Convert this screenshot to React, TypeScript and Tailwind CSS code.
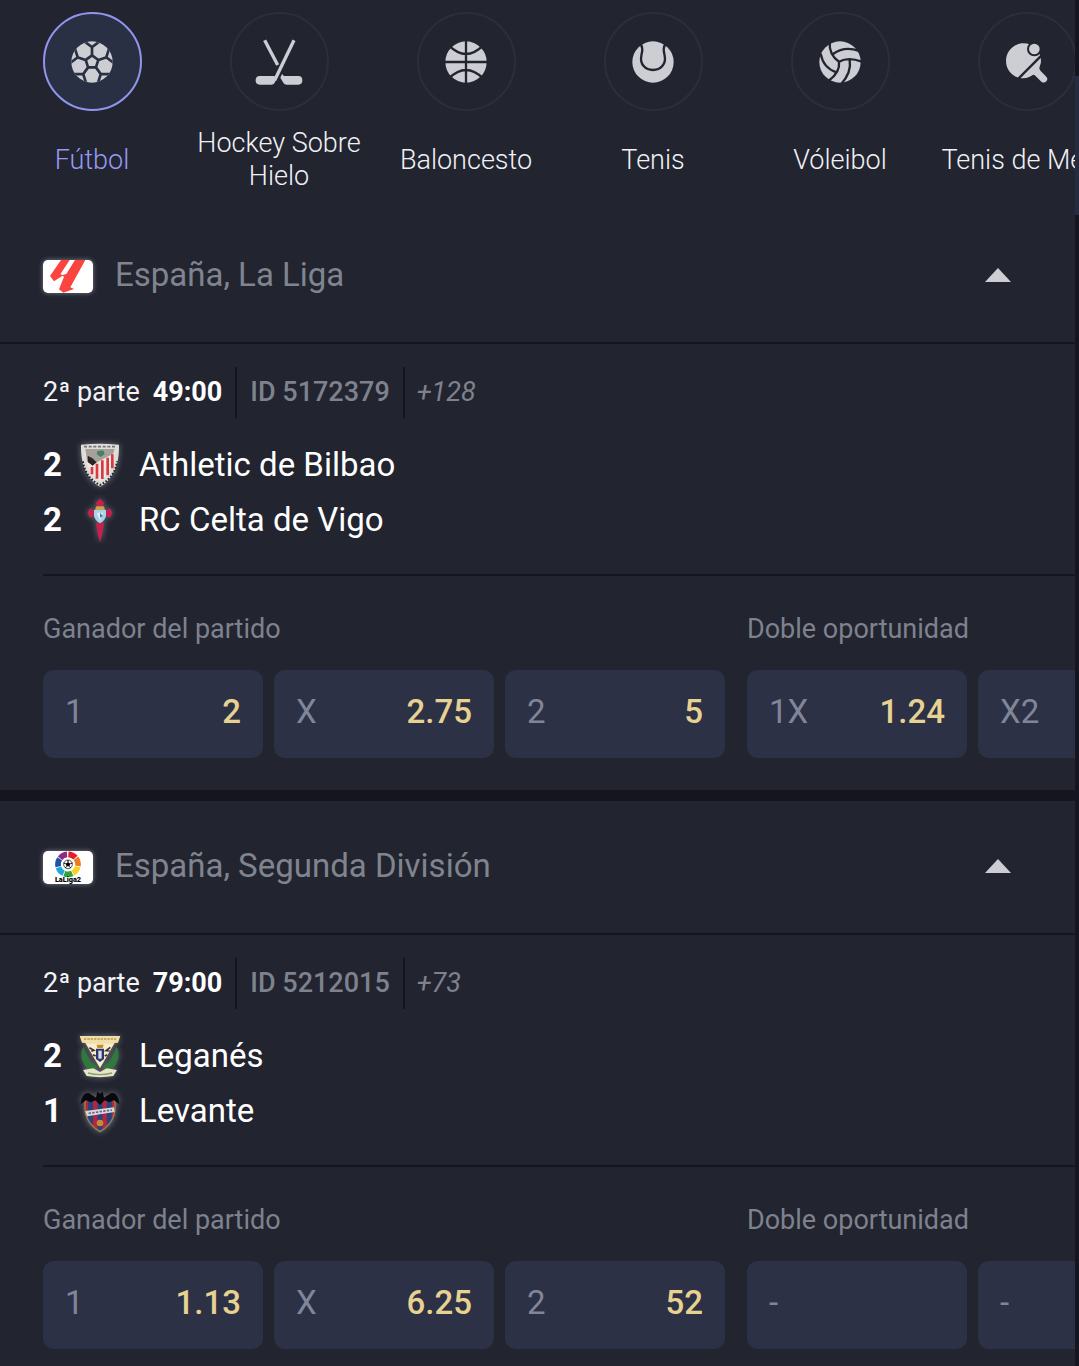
import { useState, type ReactNode } from 'react';
import clsx from 'clsx';

interface Outcome {
  label: string;
  odd?: string;
}

interface Market {
  name: string;
  outcomes: Outcome[];
}

interface Team {
  name: string;
  score: number;
  crest: ReactNode;
}

interface League {
  name: string;
  logo: ReactNode;
  period: string;
  time: string;
  eventId: string;
  more: string;
  teams: Team[];
  markets: Market[];
}

const SPOKES = [0, 72, 144, 216, 288];

function FootballIcon() {
  return (
    <svg viewBox="0 0 150 150" className="size-[50px]" aria-hidden="true">
      <defs>
        <clipPath id="football-clip">
          <circle cx="75" cy="75" r="62" />
        </clipPath>
      </defs>
      <circle cx="75" cy="75" r="62" className="fill-[#cdced3]" />
      <g clipPath="url(#football-clip)" className="fill-none stroke-[#293044]" strokeWidth="8">
        {SPOKES.map((deg) => (
          <path key={deg} d="M94 69L75 55V31M50 12L75 30L100 12" transform={`rotate(${deg} 75 75)`} />
        ))}
      </g>
    </svg>
  );
}

function HockeyIcon() {
  return (
    <svg viewBox="0 0 150 150" className="size-[50px]" aria-hidden="true">
      <g className="fill-none stroke-[#cdced3]" strokeWidth="10">
        <path d="M32 10L71 84" />
        <path d="M120 10L62 130" />
      </g>
      <g className="fill-[#cdced3]">
        <path d="M17 117H60L69 123L62 137Q59 143 52 143H17Q5 143 5 130T17 117Z" />
        <path d="M84 111L90 117H133Q145 117 145 130T133 143H98Q91 143 88 137L79 122Z" />
      </g>
    </svg>
  );
}

function BasketballIcon() {
  return (
    <svg viewBox="0 0 150 150" className="size-[50px]" aria-hidden="true">
      <circle cx="75" cy="75" r="62" className="fill-[#cdced3]" />
      <path
        d="M75 10V140M10 75H140M24 26Q75 76 126 26M24 124Q75 74 126 124"
        className="fill-none stroke-[#222430]"
        strokeWidth="7"
      />
    </svg>
  );
}

function TennisIcon() {
  return (
    <svg viewBox="0 0 150 150" className="size-[50px]" aria-hidden="true">
      <circle cx="75" cy="75" r="62" className="fill-[#cdced3]" />
      <path
        d="M36 18C46 32 43 42 40 56C35 82 52 99 75 99S115 82 110 56C107 42 104 32 114 18"
        className="fill-none stroke-[#222430]"
        strokeWidth="7"
      />
    </svg>
  );
}

function VolleyballIcon() {
  return (
    <svg viewBox="0 0 150 150" className="size-[50px]" aria-hidden="true">
      <circle cx="75" cy="75" r="62" className="fill-[#cdced3]" />
      <path
        d="M44 14C42 44 54 62 72 74C95 62 116 65 140 74M72 74C75 98 63 116 40 132M17 50C22 78 40 98 64 106M54 51C76 35 104 31 132 42M104 68C109 98 98 120 78 142"
        className="fill-none stroke-[#222430]"
        strokeWidth="7"
      />
    </svg>
  );
}

function TableTennisIcon() {
  return (
    <svg viewBox="0 0 150 150" className="size-[50px]" aria-hidden="true">
      <path
        d="M64 19C96 19 117 43 117 72C117 80 113 87 112 94Q112 98 116 102L133 119Q139 126 133 133T118 134L100 116Q96 112 92 114C84 119 76 124 64 124C34 124 12 100 12 71S35 19 64 19Z"
        className="fill-[#cdced3]"
      />
      <path d="M50 124L118 56" className="stroke-[#222430]" strokeWidth="7" />
      <circle cx="97" cy="36" r="19" className="fill-[#cdced3] stroke-[#222430]" strokeWidth="6" />
    </svg>
  );
}

function LaLigaLogo() {
  return (
    <svg viewBox="0 0 150 99" className="size-full" aria-hidden="true">
      <g className="fill-[#fb4440]">
        <path d="M54 0H80L52 43L61 46L33 64L21 48Z" />
        <path d="M96 0H127L82 82L93 87L61 98L48 88L63 50L56 46L70 42Z" />
      </g>
    </svg>
  );
}

const RING = ['#e2202c', '#f07a22', '#f8d21c', '#2fa43c', '#22a7e0', '#2052a8', '#8a2b86'];

function LaLiga2Logo() {
  return (
    <svg viewBox="0 0 150 99" className="size-full" aria-hidden="true">
      <g className="fill-none" strokeWidth="17">
        {RING.map((color, i) => (
          <circle
            key={color}
            cx="75"
            cy="40"
            r="30"
            pathLength="70"
            strokeDasharray="9 61"
            stroke={color}
            transform={`rotate(${i * 51 - 88} 75 40)`}
          />
        ))}
      </g>
      <circle cx="75" cy="40" r="13" className="fill-white stroke-black" strokeWidth="2" />
      <path d="M75 33L82 38L79 46H71L68 38Z" />
      <path d="M75 33V27M82 38L88 36M79 46L83 51M71 46L67 51M68 38L62 36" className="stroke-black" strokeWidth="3" />
      <text x="75" y="94" textAnchor="middle" className="fill-black font-[Roboto,sans-serif] text-[22px] font-black">
        LaLiga2
      </text>
    </svg>
  );
}

function AthleticCrest() {
  return (
    <svg viewBox="0 0 132 132" className="size-full" aria-hidden="true">
      <path d="M9 5Q66 -1 123 5C124 58 110 106 66 131C22 106 8 58 9 5Z" className="fill-[#deddd9]" />
      <path d="M15 55C19 85 34 110 66 126C98 110 113 85 117 55" className="fill-none stroke-[#26262a]" strokeWidth="6" strokeDasharray="5 5" />
      <path d="M18 11H114" className="stroke-[#77777a]" strokeWidth="5" strokeDasharray="9 5" />
      <path d="M22 18H110C111 58 98 95 66 115C34 95 21 58 22 18Z" className="fill-[#f3e8e3]" />
      <path d="M22 18H110L106 32L46 64L27 56Z" className="fill-[#a7a19c]" />
      <path d="M58 24L76 22L80 34L68 42L56 34Z" className="fill-[#4b8064]" />
      <path d="M29 38L43 46L56 58L44 68L30 58Z" className="fill-[#2b2527]" />
      <path d="M42 72V94M57 62V107M73 52V108M89 44V97M103 34V76" className="stroke-[#d53c42]" strokeWidth="8" />
    </svg>
  );
}

function CeltaCrest() {
  return (
    <svg viewBox="0 0 132 132" className="size-full" aria-hidden="true">
      <g className="fill-[#c91f4d]">
        <path d="M66 2L79 15L71 29H61L53 15Z" />
        <path d="M29 45L36 31L53 42V49L36 59Z" />
        <path d="M103 45L96 31L79 42V49L96 59Z" />
        <path d="M54 75H78L72 112L66 134L60 112Z" />
      </g>
      <path d="M48 36H84V54Q80 70 66 76Q52 70 48 54Z" className="fill-[#a9d2ec]" />
      <path d="M55 25H77L81 36H51Z" className="fill-[#c9a64b]" />
      <path d="M56 44H76L66 67Z" className="fill-[#e3f0f8]" />
      <path d="M66 44L75 54L66 59Z" className="fill-[#4d7fa8]" />
    </svg>
  );
}

function LeganesCrest() {
  return (
    <svg viewBox="0 0 132 132" className="size-full" aria-hidden="true">
      <path d="M5 6H127L120 26L110 27L66 103L22 27L12 26Z" className="fill-[#f0dfa6]" />
      <path d="M18 15H114" className="stroke-[#b99c55]" strokeWidth="5" strokeDasharray="7 3" />
      <path d="M16 38C2 62 14 106 50 112L58 97C40 92 30 72 16 38Z" className="fill-[#2e7a3d]" />
      <path d="M116 38C130 62 118 106 82 112L74 97C92 92 102 72 116 38Z" className="fill-[#2e7a3d]" />
      <path d="M26 29H106L66 99Z" className="fill-[#f7edcf]" />
      <path d="M54 44H78V75L66 84L54 75Z" className="fill-[#27366e]" />
      <path d="M61 50H71V74H61Z" className="fill-[#dadbe2]" />
      <path d="M56 32H77L74 42H58Z" className="fill-[#c78a31]" />
      <path d="M34 41L48 49L40 52M97 40L84 50L95 51M45 62L53 66M88 62L80 66" className="fill-none stroke-[#39352f]" strokeWidth="5" />
      <path d="M15 108L46 103L66 114L86 103L117 108L106 126Q66 133 26 126Z" className="fill-[#e9e3c7]" />
      <path d="M30 117Q66 127 102 117" className="fill-none stroke-[#80a36f]" strokeWidth="4" />
    </svg>
  );
}

function LevanteCrest() {
  return (
    <svg viewBox="0 0 132 132" className="size-full" aria-hidden="true">
      <path d="M22 34Q66 24 110 34C117 78 100 108 66 128C32 108 15 78 22 34Z" className="fill-[#b5263a]" />
      <path d="M38 36V106M66 34V125M94 36V106" className="stroke-[#26437f]" strokeWidth="15" />
      <path d="M22 34Q66 24 110 34C117 78 100 108 66 128C32 108 15 78 22 34Z" className="fill-none stroke-[#958347]" strokeWidth="4" />
      <path d="M8 46C10 22 20 10 32 12L54 26L58 8L66 14L74 8L78 26L100 12C114 10 122 22 124 46L108 34L94 40L80 34L66 48L52 34L38 40L24 34Z" className="fill-[#08090d]" />
      <path d="M22 66L108 55L110 69L27 82Z" className="fill-[#d5d7df]" />
      <path d="M32 73L102 63" className="stroke-[#5a6382]" strokeWidth="5" strokeDasharray="7 4" />
      <circle cx="66" cy="102" r="10" className="fill-[#c58a3c]" />
    </svg>
  );
}

const SPORTS = [
  { name: 'Fútbol', icon: <FootballIcon /> },
  { name: 'Hockey Sobre Hielo', icon: <HockeyIcon /> },
  { name: 'Baloncesto', icon: <BasketballIcon /> },
  { name: 'Tenis', icon: <TennisIcon /> },
  { name: 'Vóleibol', icon: <VolleyballIcon /> },
  { name: 'Tenis de Mesa', icon: <TableTennisIcon /> },
];

const LEAGUES: League[] = [
  {
    name: 'España, La Liga',
    logo: <LaLigaLogo />,
    period: '2ª parte',
    time: '49:00',
    eventId: '5172379',
    more: '+128',
    teams: [
      { name: 'Athletic de Bilbao', score: 2, crest: <AthleticCrest /> },
      { name: 'RC Celta de Vigo', score: 2, crest: <CeltaCrest /> },
    ],
    markets: [
      {
        name: 'Ganador del partido',
        outcomes: [
          { label: '1', odd: '2' },
          { label: 'X', odd: '2.75' },
          { label: '2', odd: '5' },
        ],
      },
      { name: 'Doble oportunidad', outcomes: [{ label: '1X', odd: '1.24' }, { label: 'X2' }] },
    ],
  },
  {
    name: 'España, Segunda División',
    logo: <LaLiga2Logo />,
    period: '2ª parte',
    time: '79:00',
    eventId: '5212015',
    more: '+73',
    teams: [
      { name: 'Leganés', score: 2, crest: <LeganesCrest /> },
      { name: 'Levante', score: 1, crest: <LevanteCrest /> },
    ],
    markets: [
      {
        name: 'Ganador del partido',
        outcomes: [
          { label: '1', odd: '1.13' },
          { label: 'X', odd: '6.25' },
          { label: '2', odd: '52' },
        ],
      },
      { name: 'Doble oportunidad', outcomes: [{ label: '-' }, { label: '-' }] },
    ],
  },
];

function SportsNav() {
  const [active, setActive] = useState('Fútbol');

  return (
    <nav className="flex gap-[11px] pt-3 pb-[17px] pl-1">
      {SPORTS.map((sport) => (
        <button
          key={sport.name}
          type="button"
          onClick={() => setActive(sport.name)}
          className="flex w-44 shrink-0 flex-col items-center gap-4"
        >
          <span
            className={clsx(
              'flex size-[99px] items-center justify-center rounded-full border-2',
              active === sport.name ? 'border-[#9195ec] bg-[#293044]' : 'border-[#2c2e3a]'
            )}
          >
            {sport.icon}
          </span>
          <span
            className={clsx(
              'flex h-[66px] items-center text-[27px] leading-[33px] font-light',
              active === sport.name ? 'text-[#9699f0]' : 'text-[#f0f1f4]'
            )}
          >
            {sport.name}
          </span>
        </button>
      ))}
    </nav>
  );
}

function OddButton({ label, odd }: Outcome) {
  return (
    <button
      type="button"
      className="flex h-[88px] w-[220px] shrink-0 items-center justify-between rounded-[11px] bg-[#2c3145] px-[22px] pb-1 text-[33px]"
    >
      <span className="text-[#80869a]">{label}</span>
      {odd && <span className="font-medium text-[#e7d292]">{odd}</span>}
    </button>
  );
}

function LeagueSection({ league }: { league: League }) {
  const [open, setOpen] = useState(true);

  return (
    <section className="border-b-[11px] border-[#14151f]">
      {/* Header */}
      <h2 className="border-b-2 border-[#14151f]">
        <button
          type="button"
          aria-expanded={open}
          onClick={() => setOpen(!open)}
          className="flex h-[132px] w-full items-center pr-16 pl-[43px] text-[33px] text-[#80848f]"
        >
          <span className="h-[33px] w-[50px] overflow-hidden rounded-[5px] bg-white shadow-[0_0_5px_rgba(255,255,255,0.4)]">
            {league.logo}
          </span>
          <span className="ml-[22px] pb-0.5">{league.name}</span>
          <svg
            viewBox="0 0 26 14"
            className={clsx('mb-0.5 ml-auto h-3.5 w-[26px] fill-[#cdced3]', !open && 'rotate-180')}
            aria-hidden="true"
          >
            <path d="M0 14L13 0L26 14Z" />
          </svg>
        </button>
      </h2>

      {open && (
        <div className="pt-[23px] pb-8 pl-[43px]">
          {/* Event info */}
          <div className="flex h-[51px] items-center text-[27px] text-[#7e828e]">
            <span className="text-[#f2f3f6]">{league.period}</span>
            <span className="ml-[13px] font-bold text-white">{league.time}</span>
            <span className="ml-[13px] flex h-full items-center border-x-2 border-[#14151f] px-[13px] font-medium">
              ID {league.eventId}
            </span>
            <a href="#markets" className="ml-3 italic">
              {league.more}
            </a>
          </div>

          {/* Teams */}
          <ul className="border-b-2 border-[#14151f] pt-[19px] pb-[27px]">
            {league.teams.map((team) => (
              <li key={team.name} className="flex h-[55px] items-center text-[33px] text-white">
                <span className="w-[35px] font-bold">{team.score}</span>
                <span className="size-11 drop-shadow-[0_0_3px_rgba(255,255,255,0.35)]">{team.crest}</span>
                <span className="ml-[17px]">{team.name}</span>
              </li>
            ))}
          </ul>

          {/* Markets */}
          <div className="flex gap-[22px] pt-[37px]">
            {league.markets.map((market) => (
              <div key={market.name} className="shrink-0">
                <h3 className="text-[27px] leading-[33px] text-[#7e828e]">{market.name}</h3>
                <div className="mt-6 flex gap-[11px]">
                  {market.outcomes.map((outcome, i) => (
                    <OddButton key={i} {...outcome} />
                  ))}
                </div>
              </div>
            ))}
          </div>
        </div>
      )}
    </section>
  );
}

export default function App() {
  return (
    <div className="flex h-screen overflow-hidden bg-[#222430] font-[Roboto,'Liberation_Sans',sans-serif]">
      <main className="min-w-0 flex-1 overflow-hidden">
        <SportsNav />
        {LEAGUES.map((league) => (
          <LeagueSection key={league.name} league={league} />
        ))}
      </main>

      {/* Scroll track */}
      <div className="w-1 shrink-0 bg-[#141521] pt-[76px]">
        <div className="h-[139px] bg-[#272b40]" />
      </div>
    </div>
  );
}
